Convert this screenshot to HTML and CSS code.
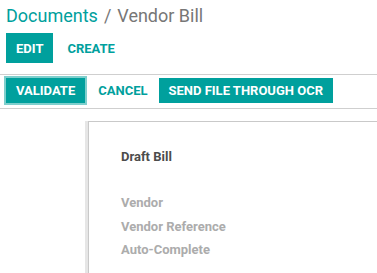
FILE: index.html
```html
<!DOCTYPE html>
<html>
<head>
<meta charset="utf-8">
<link rel="stylesheet" href="styles.css">
</head>
<body>
<div class="control-panel">
  <div class="breadcrumb"><span class="crumb-link">Documents</span><span class="crumb-sep">/</span><span class="crumb-active">Vendor Bill</span></div>
  <div class="cp-buttons">
    <button class="btn btn-primary">EDIT</button>
    <button class="btn btn-link">CREATE</button>
  </div>
</div>
<div class="statusbar">
  <span class="focus-ring"><button class="btn btn-primary">VALIDATE</button></span>
  <button class="btn btn-link">CANCEL</button>
  <button class="btn btn-primary">SEND FILE THROUGH OCR</button>
</div>
<div class="sheet-area">
  <div class="sheet">
    <div class="sheet-title">Draft Bill</div>
    <div class="fields">
      <div class="field">Vendor</div>
      <div class="field">Vendor Reference</div>
      <div class="field">Auto-Complete</div>
    </div>
  </div>
</div>
</body>
</html>
```
FILE: styles.css
```css
html, body {
  margin: 0;
  padding: 0;
  background: #fff;
  font-family: Roboto, "Noto Sans", sans-serif;
  overflow: hidden;
  height: 273px;
}
body {
  display: flex;
  flex-direction: column;
}
.control-panel {
  padding: 4px 6px 11px 6px;
  border-bottom: 1px solid #cfcfcf;
}
.breadcrumb {
  font-size: 18px;
  line-height: 24px;
  height: 24px;
}
.crumb-link { color: #00a09d; }
.crumb-sep { color: #777; margin: 0 6px; }
.crumb-active { color: #777; }
.cp-buttons {
  display: flex;
  margin-top: 5px;
}
.btn {
  font-family: Roboto, "Noto Sans", sans-serif;
  font-size: 13px;
  font-weight: 700;
  border: none;
  border-radius: 0;
  height: 30px;
  padding: 0 10px;
  cursor: pointer;
}
.btn-primary {
  background: #00a09d;
  color: #fff;
}
.btn-link {
  background: transparent;
  color: #00a09d;
  padding: 0 14px;
}
.statusbar {
  display: flex;
  align-items: center;
  padding: 1px 4px 3px 4px;
  border-bottom: 1px solid #cfcfcf;
}
.statusbar .btn { height: 25px; padding: 0 10px; }
.statusbar .btn-link { padding: 0 11px; }
.focus-ring {
  display: flex;
  border: 2px solid #7fcfcd;
}
.sheet-area {
  flex: 1;
  display: flex;
  flex-direction: column;
  padding: 12px 0 0 88px;
  background: #fff;
  min-height: 0;
}
.sheet {
  flex: 1;
  background: #fff;
  border-top: 1px solid #c9c9c9;
  border-left: 1px solid #c9c9c9;
  box-shadow: -3px 0 0 #e6e6e6;
  padding: 27px 0 0 32px;
}
.sheet-title {
  font-size: 13px;
  font-weight: 700;
  color: #4c4c4c;
  line-height: 16px;
}
.fields {
  margin-top: 30px;
  display: flex;
  flex-direction: column;
  gap: 7.5px;
}
.field {
  font-size: 13px;
  font-weight: 700;
  color: #acacac;
  line-height: 16px;
}
```
